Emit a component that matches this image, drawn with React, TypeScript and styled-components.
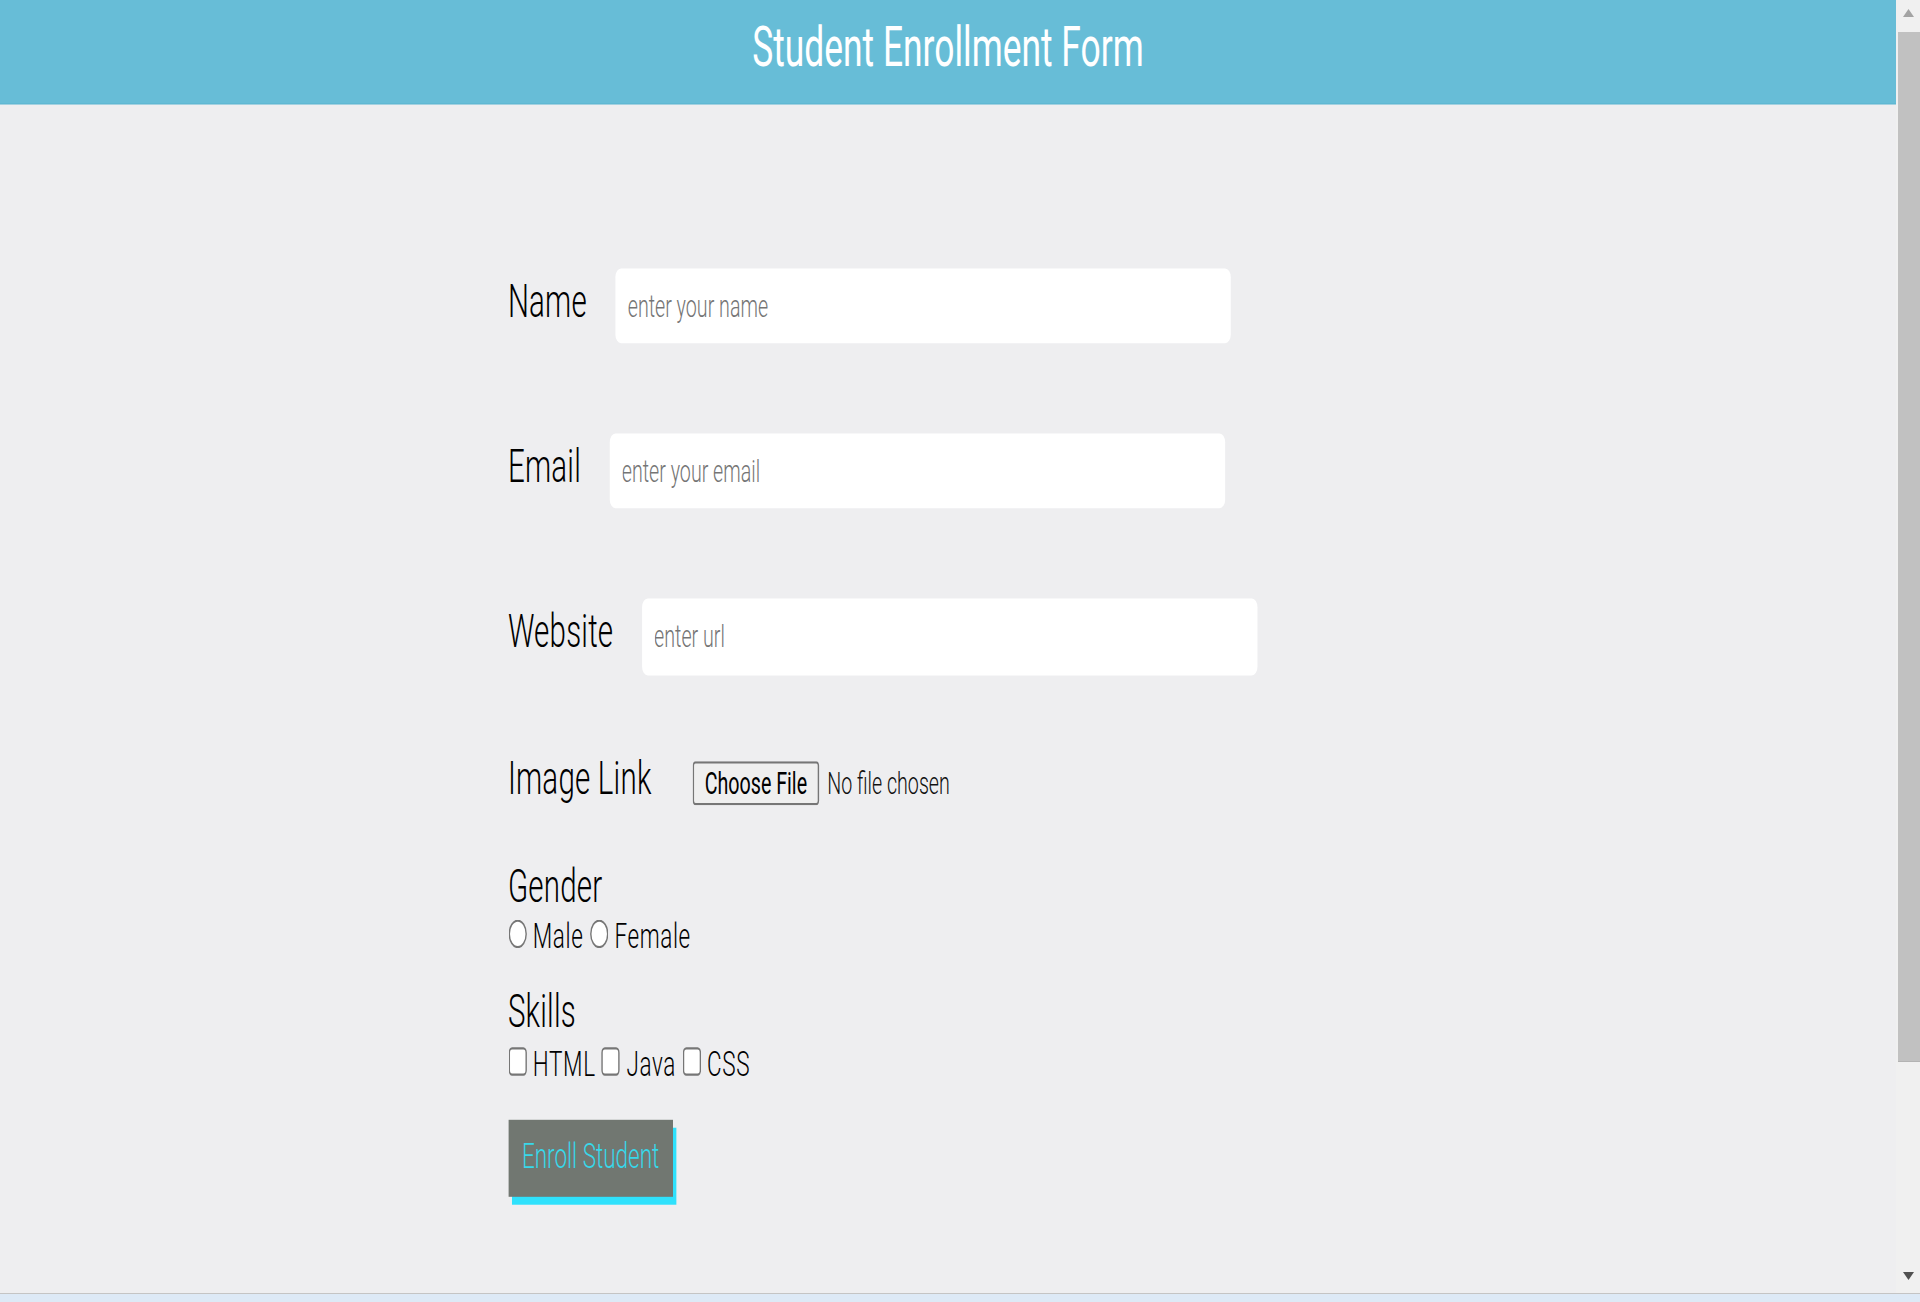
import React from "react";
import styled, { createGlobalStyle } from "styled-components";

const Global = createGlobalStyle`
  html, body {
    margin: 0;
    padding: 0;
    height: 100%;
    overflow: hidden;
  }
  #root { height: 100%; }
  * { box-sizing: border-box; }
`;

const Screen = styled.div`
  height: 100vh;
  display: flex;
  flex-direction: column;
`;

const Window = styled.div`
  flex: 1;
  min-height: 0;
  display: flex;
`;

const Viewport = styled.div`
  flex: 1;
  min-width: 0;
  overflow: hidden;
  background: #eeeef0;
`;

/* Scrollbar drawn as in the capture */
const ScrollBar = styled.div`
  width: 24px;
  flex: none;
  display: flex;
  flex-direction: column;
  background: #f0f0f0;
`;

const ScrollArrow = styled.div`
  height: 30px;
  flex: none;
  display: flex;
  justify-content: center;
  padding-top: 9px;
  padding-left: 1px;
`;

const ScrollTrack = styled.div`
  flex: 1;
  padding: 2px 0 0 2px;
`;

const ScrollThumb = styled.div`
  height: 1030px;
  background: #c1c1c1;
  border-bottom: 1px solid #b3b3b3;
`;

/* The reference is a 1366px-wide capture stretched non-uniformly to fill the frame */
const Stage = styled.div`
  width: 1349.5px;
  transform: scale(1.405, 2.2);
  transform-origin: 0 0;
  font-family: Roboto, "Liberation Sans", sans-serif;
`;

const Header = styled.header`
  height: 47px;
  padding-top: 7.2px;
  background: #67bdd7;
  box-shadow: 0 0.5px 0 #5ab4d0;
  text-align: center;
`;

const Title = styled.h1`
  margin: 0;
  font-size: 25.2px;
  line-height: 30px;
  font-weight: 400;
  color: #ffffff;
`;

const Form = styled.form`
  width: 626.5px;
  margin: 0 0 0 361.5px;
  padding-top: 74.8px;
`;

const FieldRow = styled.div<{ $mt?: number; $gap?: number }>`
  display: flex;
  align-items: baseline;
  gap: ${(p) => p.$gap ?? 20}px;
  margin-top: ${(p) => p.$mt ?? 0}px;
`;

const FieldLabel = styled.label`
  font-size: 21px;
  line-height: 24.6px;
  font-weight: 300;
  letter-spacing: 0.15px;
  color: #000;
  white-space: nowrap;
`;

const TextInput = styled.input`
  width: 438.5px;
  height: 34.5px;
  padding: 0 9px;
  border: none;
  border-radius: 4px;
  background: #ffffff;
  font-family: Roboto, "Liberation Sans", sans-serif;
  font-size: 14px;
  font-weight: 300;
  color: #000;
  outline: none;

  &::placeholder {
    color: #757575;
  }
`;

const FileInput = styled.input`
  font-family: Roboto, "Liberation Sans", sans-serif;
  font-size: 14px;
  font-weight: 300;
  color: #111;

  &::file-selector-button {
    font-family: Roboto, "Liberation Sans", sans-serif;
    font-size: 14px;
    font-weight: 400;
    color: #000;
    background: #efefef;
    border: 1px solid #767676;
    border-radius: 2px;
    padding: 1px 8px;
    margin: 0 5.3px 0 0;
  }
`;

const GroupTitle = styled.div<{ $mt: number }>`
  margin-top: ${(p) => p.$mt}px;
  font-size: 21px;
  line-height: 24.6px;
  font-weight: 300;
  letter-spacing: 0.15px;
  color: #000;
`;

const OptionRow = styled.div<{ $mt: number }>`
  display: flex;
  align-items: baseline;
  gap: 4.5px;
  margin-top: ${(p) => p.$mt}px;
  padding-left: 0.2px;
  font-size: 16px;
  line-height: 18.75px;
  font-weight: 300;
  letter-spacing: 0.45px;
  color: #000;
`;

const Choice = styled.input`
  margin: 0;
  width: 13px;
  height: 13px;
`;

const ChoiceText = styled.span``;

const EnrollButton = styled.button`
  display: block;
  margin-top: 15px;
  padding: 8px 10px;
  border: none;
  background: #717771;
  color: #37d8ea;
  font-family: Roboto, "Liberation Sans", sans-serif;
  font-size: 16px;
  line-height: 18.75px;
  font-weight: 300;
  box-shadow: 2.4px 3.6px 0 #2fe1fc;
  cursor: pointer;
`;

const Taskbar = styled.div`
  height: 9px;
  flex: none;
  border-top: 1px solid #c4c4c4;
  background: #dde9f6;
`;

function Arrow({ down }: { down?: boolean }) {
  return (
    <svg width="11" height="8" viewBox="0 0 11 8">
      {down ? (
        <polygon points="0,0 11,0 5.5,8" fill="#505050" />
      ) : (
        <polygon points="5.5,0 11,8 0,8" fill="#a3a3a3" />
      )}
    </svg>
  );
}

export default function App() {
  return (
    <>
      <Global />
      <Screen>
        <Window>
          <Viewport>
            <Stage>
              <Header>
                <Title>Student Enrollment Form</Title>
              </Header>
              <Form onSubmit={(e) => e.preventDefault()}>
                <FieldRow>
                  <FieldLabel htmlFor="name">Name</FieldLabel>
                  <TextInput id="name" type="text" placeholder="enter your name" />
                </FieldRow>
                <FieldRow $mt={40.7}>
                  <FieldLabel htmlFor="email">Email</FieldLabel>
                  <TextInput id="email" type="email" placeholder="enter your email" />
                </FieldRow>
                <FieldRow $mt={40.7}>
                  <FieldLabel htmlFor="url">Website</FieldLabel>
                  <TextInput id="url" type="url" placeholder="enter url" />
                </FieldRow>
                <FieldRow $mt={35.7} $gap={28.8}>
                  <FieldLabel htmlFor="img">Image Link</FieldLabel>
                  <FileInput id="img" type="file" />
                </FieldRow>
                <GroupTitle $mt={24}>Gender</GroupTitle>
                <OptionRow $mt={1.1}>
                  <Choice type="radio" name="gender" />
                  <ChoiceText>Male</ChoiceText>
                  <Choice type="radio" name="gender" />
                  <ChoiceText>Female</ChoiceText>
                </OptionRow>
                <GroupTitle $mt={13.1}>Skills</GroupTitle>
                <OptionRow $mt={2.2}>
                  <Choice type="checkbox" />
                  <ChoiceText>HTML</ChoiceText>
                  <Choice type="checkbox" />
                  <ChoiceText>Java</ChoiceText>
                  <Choice type="checkbox" />
                  <ChoiceText>CSS</ChoiceText>
                </OptionRow>
                <EnrollButton type="submit">Enroll Student</EnrollButton>
              </Form>
            </Stage>
          </Viewport>
          <ScrollBar>
            <ScrollArrow>
              <Arrow />
            </ScrollArrow>
            <ScrollTrack>
              <ScrollThumb />
            </ScrollTrack>
            <ScrollArrow>
              <Arrow down />
            </ScrollArrow>
          </ScrollBar>
        </Window>
        <Taskbar />
      </Screen>
    </>
  );
}
